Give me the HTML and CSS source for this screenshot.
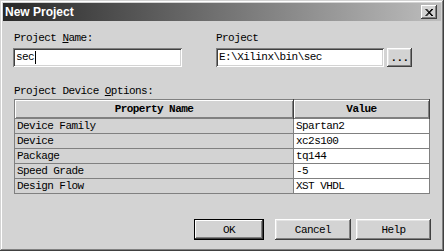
FILE: index.html
```html
<!DOCTYPE html>
<html>
<head>
  <meta charset="UTF-8">
  <title>New Project</title>
  <link rel="stylesheet" href="styles.css">
</head>
<body>
  <div class="window">
    <!-- 标题栏 -->
    <div class="titlebar">
      <span class="title">New Project</span>
      <span class="close-btn">
        <svg width="8" height="7" viewBox="0 0 8 7">
          <path d="M0.5 0L7 7M1.5 0L8 7M7 0L0.5 7M8 0L1.5 7" stroke="#000" stroke-width="1" fill="none"/>
        </svg>
      </span>
    </div>

    <div class="content">
      <div class="fields">
        <div class="field name-field">
          <div class="label">Project <u>N</u>ame:</div>
          <div class="textbox">sec<span class="caret"></span></div>
        </div>
        <div class="field path-field">
          <div class="label">Project</div>
          <div class="path-row">
            <div class="textbox path-box">E:\Xilinx\bin\sec</div>
            <button class="btn browse">...</button>
          </div>
        </div>
      </div>

      <div class="section-label">Project Device <u>O</u>ptions:</div>

      <table class="props">
        <thead>
          <tr>
            <th class="col-name">Property Name</th>
            <th class="col-value">Value</th>
          </tr>
        </thead>
        <tbody>
          <tr><td class="prop">Device Family</td><td class="val">Spartan2</td></tr>
          <tr><td class="prop">Device</td><td class="val">xc2s100</td></tr>
          <tr><td class="prop">Package</td><td class="val">tq144</td></tr>
          <tr><td class="prop">Speed Grade</td><td class="val">-5</td></tr>
          <tr><td class="prop">Design Flow</td><td class="val">XST VHDL</td></tr>
        </tbody>
      </table>

      <div class="actions">
        <button class="btn default ok">OK</button>
        <button class="btn cancel">Cancel</button>
        <button class="btn help">Help</button>
      </div>
    </div>
  </div>
</body>
</html>
```

FILE: styles.css
```css
body {
  margin: 0;
  background-color: #d3d3d3;
  font-family: "Liberation Mono", monospace;
  font-size: 11px;
  letter-spacing: -0.55px;
  color: #000;
}
.window {
  width: 444px;
  height: 251px;
  box-sizing: border-box;
  padding: 3px;
  background-color: #d3d3d3;
  box-shadow: inset -1px -1px #404040, inset 1px 1px #d3d3d3,
              inset -2px -2px #808080, inset 2px 2px #fff;
}
.titlebar {
  height: 18px;
  display: flex;
  align-items: center;
  justify-content: space-between;
  background: linear-gradient(to right, #282828, #bdbdbd);
  padding-left: 2px;
}
.title {
  font-family: "Liberation Sans", Arial, sans-serif;
  font-weight: bold;
  font-size: 12px;
  letter-spacing: 0;
  color: #fff;
}
.close-btn {
  width: 16px;
  height: 14px;
  margin-right: 4px;
  display: flex;
  align-items: center;
  justify-content: center;
  background-color: #d3d3d3;
  box-shadow: inset -1px -1px #404040, inset 1px 1px #fff,
              inset -2px -2px #808080;
}
.content {
  padding: 11px 10px 0 11px;
}
.label, .section-label {
  height: 12px;
  line-height: 12px;
  white-space: nowrap;
}
.fields {
  display: flex;
}
.name-field {
  width: 168px;
  margin-right: 34px;
}
.textbox {
  height: 19px;
  margin-top: 4px;
  box-sizing: border-box;
  background-color: #fff;
  padding: 3px 0 0 3px;
  line-height: 13px;
  white-space: nowrap;
  box-shadow: inset 1px 1px #808080, inset -1px -1px #fff,
              inset 2px 2px #404040, inset -2px -2px #d3d3d3;
}
.name-field .textbox {
  margin-left: -1px;
}
.caret {
  display: inline-block;
  width: 1px;
  height: 13px;
  margin-left: 1px;
  background-color: #000;
  vertical-align: top;
}
.path-row {
  display: flex;
  align-items: flex-start;
}
.path-box {
  width: 168px;
}
.btn {
  font-family: "Liberation Mono", monospace;
  font-size: 11px;
  letter-spacing: -0.55px;
  color: #000;
  background-color: #d3d3d3;
  border: none;
  padding: 0;
  box-sizing: border-box;
  box-shadow: inset -1px -1px #404040, inset 1px 1px #fff,
              inset -2px -2px #808080, inset 2px 2px #e4e4e4;
}
.browse {
  width: 25px;
  height: 19px;
  margin-top: 4px;
  margin-left: 3px;
  font-weight: bold;
}
.section-label {
  margin-top: 18px;
}
.props {
  margin-top: 2px;
  width: 416px;
  border-collapse: collapse;
  border: 1px solid #808080;
}
.props th {
  height: 18px;
  padding: 0;
  font-weight: bold;
  text-align: center;
  background-color: #d3d3d3;
  box-shadow: inset 1px 1px #fff, inset -1px -1px #808080;
  border-right: 1px solid #404040;
}
.props th.col-name {
  width: 278px;
}
.props td {
  height: 14px;
  padding: 0 0 0 2px;
  line-height: 13px;
  border: 1px solid #808080;
  white-space: nowrap;
}
.props td.val {
  background-color: #fff;
}
.actions {
  margin-top: 25px;
  display: flex;
  justify-content: flex-end;
}
.actions .btn {
  height: 21px;
}
.ok {
  width: 70px;
  margin-right: 11px;
}
.default {
  box-shadow: inset 0 0 0 1px #000, inset -2px -2px #404040,
              inset 2px 2px #fff, inset -3px -3px #808080;
}
.cancel {
  width: 76px;
  margin-right: 5px;
}
.help {
  width: 75px;
}
```
